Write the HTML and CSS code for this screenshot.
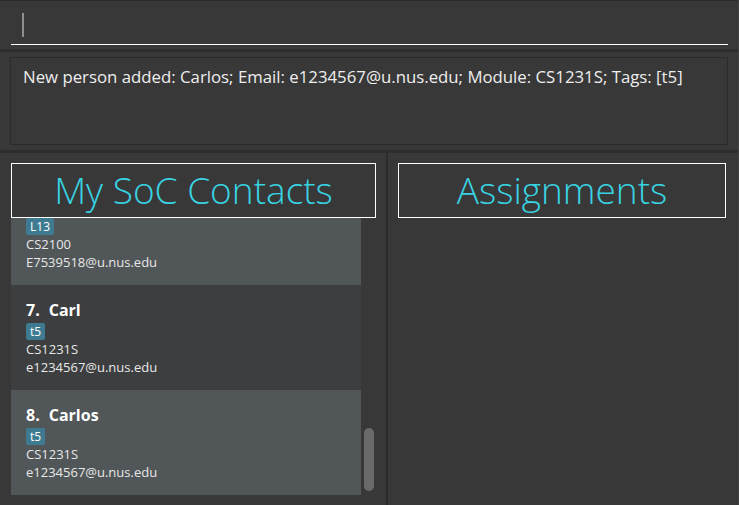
FILE: index.html
```html
<!DOCTYPE html>
<html>
<head>
<meta charset="utf-8">
<title>My SoC Contacts</title>
<link rel="stylesheet" href="styles.css">
</head>
<body>
<div class="app">
  <div class="command-bar">
    <div class="command-field"><span class="caret"></span></div>
  </div>
  <div class="result-bar">
    <div class="result-box">New person added: Carlos; Email: e1234567@u.nus.edu; Module: CS1231S; Tags: [t5]</div>
  </div>
  <div class="panes">
    <section class="pane pane-left">
      <h1 class="pane-title">My SoC Contacts</h1>
      <div class="list-viewport">
        <div class="list-clip">
          <div class="list">
            <div class="cell cell-odd cell-partial">
              <div class="tags"><span class="tag">L13</span></div>
              <div class="cell-line">CS2100</div>
              <div class="cell-line">E7539518@u.nus.edu</div>
            </div>
            <div class="cell cell-even">
              <div class="cell-name"><span class="cell-id">7.</span><span>Carl</span></div>
              <div class="tags"><span class="tag">t5</span></div>
              <div class="cell-line">CS1231S</div>
              <div class="cell-line">e1234567@u.nus.edu</div>
            </div>
            <div class="cell cell-odd">
              <div class="cell-name"><span class="cell-id">8.</span><span>Carlos</span></div>
              <div class="tags"><span class="tag">t5</span></div>
              <div class="cell-line">CS1231S</div>
              <div class="cell-line">e1234567@u.nus.edu</div>
            </div>
          </div>
        </div>
        <div class="scroll-track"><div class="scroll-thumb" style="margin-top:210px"></div></div>
      </div>
    </section>
    <div class="divider"></div>
    <section class="pane pane-right">
      <h1 class="pane-title">Assignments</h1>
    </section>
  </div>
</div>
</body>
</html>
```

FILE: styles.css
```css
* { box-sizing: border-box; }

html, body {
  margin: 0;
  padding: 0;
  background: #383838;
}

body {
  font-family: "Open Sans", "Noto Sans", sans-serif;
  color: #ffffff;
  width: 739px;
  height: 505px;
  overflow: hidden;
}

.app {
  display: flex;
  flex-direction: column;
  width: 739px;
  height: 505px;
  border-right: 1px solid #404040;
}

.command-bar {
  height: 52px;
  border-top: 1px solid #2b2b2b;
  border-bottom: 3px solid #2d2d2d;
  padding: 0 10px 0 11px;
  flex: none;
}

.command-field {
  height: 44px;
  border-bottom: 1px solid #ffffff;
  padding: 12px 0 0 11px;
}

.caret {
  display: block;
  width: 2px;
  height: 24px;
  background: #8e8e8e;
}

.result-bar {
  height: 101px;
  padding: 5px 10px 5px 10px;
  border-bottom: 3px solid #2d2d2d;
  flex: none;
}

.result-box {
  height: 88px;
  border: 1px solid #2b2b2b;
  padding: 7px 12px;
  font-size: 16.8px;
  line-height: 23px;
  color: #eeeeee;
  white-space: nowrap;
}

.panes {
  display: flex;
  flex: 1;
  min-height: 0;
}

.pane {
  display: flex;
  flex-direction: column;
  min-height: 0;
}

.pane-left {
  width: 386px;
  padding: 10px 10px 10px 11px;
  flex: none;
}

.pane-right {
  flex: 1;
  padding: 10px 12px 0 10px;
}

.divider {
  width: 2px;
  background: #2b2b2b;
  flex: none;
}

.pane-title {
  margin: 0;
  height: 55px;
  border: 1px solid #ffffff;
  font-size: 37px;
  font-weight: 300;
  line-height: 52px;
  text-align: center;
  color: #38d3e2;
  flex: none;
}

.list-viewport {
  flex: 1;
  display: flex;
  min-height: 0;
}

.list-clip {
  width: 350px;
  overflow: hidden;
}

.cell {
  height: 105px;
  padding: 14px 15px 14px 15px;
}

.cell-partial {
  height: 67px;
  padding-top: 0;
}

.cell-odd { background: #515658; }
.cell-even { background: #3c3e3f; }

.cell-name {
  display: flex;
  gap: 9px;
  font-size: 16px;
  font-weight: 700;
  line-height: 22px;
  color: #ffffff;
}

.tags {
  display: flex;
  gap: 4px;
  margin-top: 2px;
}

.cell-partial .tags {
  margin-top: 0;
}

.tag {
  display: block;
  height: 17px;
  padding: 0 4px;
  background: #3e7b91;
  border-radius: 2px;
  font-size: 12px;
  line-height: 17px;
  color: #ffffff;
}

.cell-line {
  font-size: 13px;
  line-height: 18px;
  color: #e8e8e8;
}

.scroll-track {
  width: 15px;
  padding-left: 3px;
}

.scroll-thumb {
  width: 10px;
  height: 63px;
  border-radius: 5px;
  background: #6a6a6a;
}
```
